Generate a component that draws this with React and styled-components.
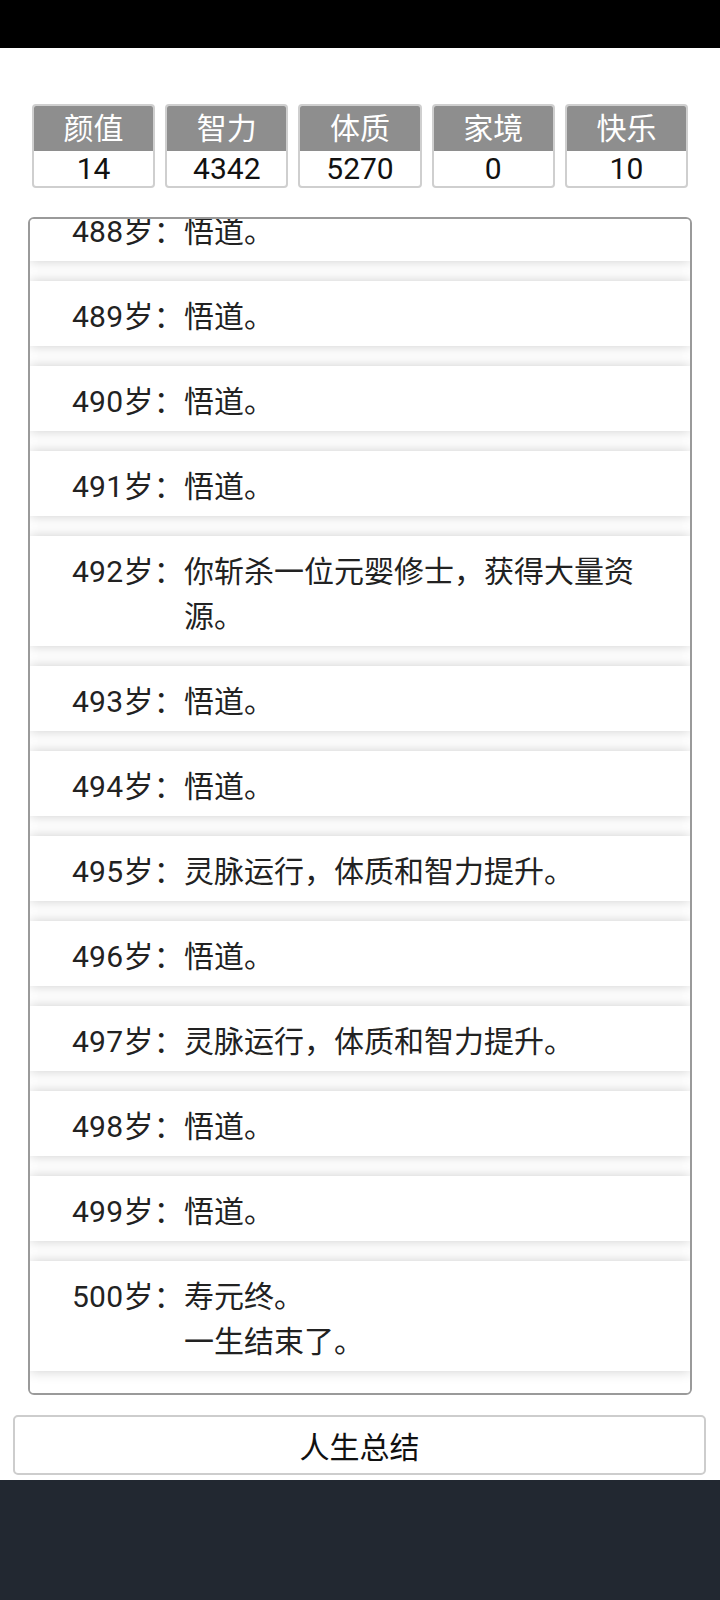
import React, { useLayoutEffect, useRef } from "react";
import styled, { createGlobalStyle } from "styled-components";

const GlobalStyle = createGlobalStyle`
  * { box-sizing: border-box; }
  html, body { margin: 0; padding: 0; background: #fff; }
  body {
    font-family: Roboto, "Noto Sans CJK SC", "Noto Sans", sans-serif;
    color: #222;
  }
`;

const stats = [
  { label: "颜值", value: 14 },
  { label: "智力", value: 4342 },
  { label: "体质", value: 5270 },
  { label: "家境", value: 0 },
  { label: "快乐", value: 10 },
];

const special = {
  492: ["你斩杀一位元婴修士，获得大量资源。"],
  495: ["灵脉运行，体质和智力提升。"],
  497: ["灵脉运行，体质和智力提升。"],
  500: ["寿元终。", "一生结束了。"],
};

const trajectory = [];
for (let age = 470; age <= 500; age++) {
  trajectory.push({ age, lines: special[age] || ["悟道。"] });
}

export default function App() {
  const listRef = useRef(null);

  // keep the newest year in view, like the running game does
  useLayoutEffect(() => {
    const el = listRef.current;
    if (el) el.scrollTop = el.scrollHeight;
  }, []);

  return (
    <Page>
      <GlobalStyle />
      <StatusBar />
      <Main>
        <StatsRow>
          {stats.map((s) => (
            <StatBox key={s.label}>
              <StatLabel>{s.label}</StatLabel>
              <StatValue>{s.value}</StatValue>
            </StatBox>
          ))}
        </StatsRow>

        <Trajectory ref={listRef}>
          {trajectory.map((item) => (
            <Event key={item.age}>
              <Age>{item.age}岁：</Age>
              <Content>
                {item.lines.map((line, i) => (
                  <div key={i}>{line}</div>
                ))}
              </Content>
            </Event>
          ))}
        </Trajectory>

        <SummaryButton>人生总结</SummaryButton>
      </Main>
      <Footer />
    </Page>
  );
}

const Page = styled.div`
  display: flex;
  flex-direction: column;
  height: 1600px;
  width: 720px;
  overflow: hidden;
`;

const StatusBar = styled.div`
  height: 48px;
  background: #000;
  flex-shrink: 0;
`;

const Main = styled.main`
  display: flex;
  flex-direction: column;
  padding-top: 56px;
  padding-bottom: 5px;
  background: #fff;
`;

const StatsRow = styled.div`
  display: grid;
  grid-template-columns: repeat(5, 1fr);
  gap: 10px;
  padding: 0 32px;
`;

const StatBox = styled.div`
  border: 2px solid #cfcfcf;
  border-radius: 4px;
  overflow: hidden;
  background: #fff;
  text-align: center;
`;

const StatLabel = styled.div`
  background: #8e8e8e;
  color: #fff;
  height: 45px;
  line-height: 45px;
  font-size: 30px;
`;

const StatValue = styled.div`
  height: 35px;
  line-height: 35px;
  font-size: 30px;
  color: #111;
`;

const Trajectory = styled.ul`
  list-style: none;
  margin: 29px 28px 0;
  padding: 0 0 22px;
  height: 1178px;
  border: 2px solid #9a9a9a;
  border-radius: 6px;
  background: #fff;
  display: flex;
  flex-direction: column;
  gap: 20px;
  overflow-y: auto;
  scrollbar-width: none;
  &::-webkit-scrollbar { display: none; }
`;

const Event = styled.li`
  flex-shrink: 0;
  display: flex;
  padding: 13px 26px 7px 0;
  background: #fff;
  box-shadow: 0 0 12px rgba(0, 0, 0, 0.2);
  font-size: 30px;
  line-height: 45px;
  color: #222;
`;

const Age = styled.span`
  width: 154px;
  flex-shrink: 0;
  text-align: right;
  white-space: nowrap;
  letter-spacing: 0.3px;
`;

const Content = styled.div`
  flex: 1;
`;

const SummaryButton = styled.button`
  margin: 20px 14px 0 13px;
  height: 60px;
  border: 2px solid #cdcdcd;
  border-radius: 5px;
  background: #fff;
  font-family: inherit;
  font-size: 30px;
  color: #111;
  cursor: pointer;
`;

const Footer = styled.footer`
  flex: 1;
  background: #222831;
`;
